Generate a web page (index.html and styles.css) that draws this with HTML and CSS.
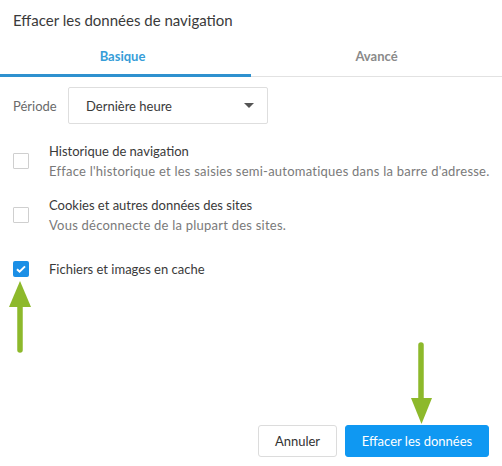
FILE: index.html
```html
<!DOCTYPE html>
<html lang="fr">
<head>
    <meta charset="UTF-8">
    <title>Effacer les données de navigation</title>
    <link rel="stylesheet" href="styles.css">
</head>
<body>
    <div class="dialog">
        <h1 class="title">Effacer les données de navigation</h1>

        <div class="tabs">
            <div class="tab active">Basique</div>
            <div class="tab">Avancé</div>
        </div>

        <div class="period">
            <label class="period-label">Période</label>
            <div class="select">
                <span>Dernière heure</span>
                <span class="caret"></span>
            </div>
        </div>

        <div class="options">
            <div class="option">
                <span class="box"></span>
                <div class="option-text">
                    <div class="option-title">Historique de navigation</div>
                    <div class="option-desc">Efface l'historique et les saisies semi-automatiques dans la barre d'adresse.</div>
                </div>
            </div>
            <div class="option">
                <span class="box"></span>
                <div class="option-text">
                    <div class="option-title">Cookies et autres données des sites</div>
                    <div class="option-desc">Vous déconnecte de la plupart des sites.</div>
                </div>
            </div>
            <div class="option">
                <span class="box checked">
                    <svg width="16" height="16" viewBox="0 0 16 16"><path d="M4 8.2l2.6 2.5L12 5.4" fill="none" stroke="#fff" stroke-width="2"/></svg>
                </span>
                <div class="option-text">
                    <div class="option-title">Fichiers et images en cache</div>
                </div>
            </div>
        </div>

        <div class="footer">
            <button class="btn cancel">Annuler</button>
            <button class="btn primary">Effacer les données</button>
        </div>

        <!-- annotation arrows drawn over the dialog -->
        <svg class="arrows" width="502" height="466" viewBox="0 0 502 466">
            <line x1="20" y1="300" x2="20" y2="350" stroke="#8db92b" stroke-width="5.5" stroke-linecap="round"/>
            <polygon points="9,307 31,307 20,281" fill="#8db92b"/>
            <line x1="421" y1="345" x2="421" y2="405" stroke="#8db92b" stroke-width="5.5" stroke-linecap="round"/>
            <polygon points="411,398 432,398 421.5,424" fill="#8db92b"/>
        </svg>
    </div>
</body>
</html>
```

FILE: styles.css
```css
body {
    margin: 0;
    font-family: Lato, "Open Sans", sans-serif;
    color: #333;
    background: #fff;
}
.dialog {
    position: relative;
    width: 502px;
    height: 466px;
    display: flex;
    flex-direction: column;
}
.title {
    margin: 0;
    padding: 10px 13px 0;
    height: 28px;
    font-size: 15px;
    font-weight: normal;
    line-height: 20px;
    color: #3a3a3a;
}
.tabs {
    display: flex;
    border-bottom: 1px solid #e2e2e2;
}
.tab {
    flex: 1;
    height: 36px;
    line-height: 36px;
    text-align: center;
    font-size: 13px;
    font-weight: bold;
    color: #8a8a8a;
    border-bottom: 3px solid transparent;
    margin-bottom: -1px;
}
.tab.active {
    color: #369dd8;
    border-bottom-color: #2f91cf;
    text-indent: -6px;
}
.period {
    display: flex;
    align-items: center;
    margin-top: 10px;
    padding-left: 13px;
}
.period-label {
    width: 55px;
    font-size: 13px;
    color: #6a6a6a;
}
.select {
    box-sizing: border-box;
    width: 200px;
    height: 37px;
    display: flex;
    align-items: center;
    justify-content: space-between;
    padding: 0 13px 0 17px;
    border: 1px solid #dedede;
    border-radius: 2px;
    font-size: 13px;
    color: #3a3a3a;
}
.caret {
    width: 0;
    height: 0;
    border-left: 5px solid transparent;
    border-right: 5px solid transparent;
    border-top: 5px solid #555;
}
.options {
    margin-top: 10px;
}
.option {
    display: flex;
    align-items: center;
    height: 54px;
    padding-left: 13px;
}
.box {
    box-sizing: border-box;
    width: 16px;
    height: 16px;
    border: 1px solid #cfcfcf;
    border-radius: 1px;
    margin-right: 20px;
    flex-shrink: 0;
}
.box.checked {
    border: none;
    border-radius: 2px;
    background: #1b8fe6;
}
.box svg {
    display: block;
}
.option-title {
    font-size: 13px;
    line-height: 20px;
    color: #3a3a3a;
}
.option-desc {
    font-size: 13px;
    line-height: 20px;
    letter-spacing: 0.23px;
    color: #7a7a7a;
}
.footer {
    margin-top: auto;
    display: flex;
    justify-content: flex-end;
    gap: 8px;
    padding: 0 13px 9px 0;
}
.btn {
    box-sizing: border-box;
    height: 32px;
    padding: 0;
    font-family: inherit;
    font-size: 13px;
    color: #333;
    background: #fff;
    border: 1px solid #dcdcdc;
    border-radius: 3px;
}
.btn.cancel {
    width: 79px;
}
.btn.primary {
    width: 144px;
    color: #fff;
    background: #0f98f2;
    border-color: #0f98f2;
}
.arrows {
    position: absolute;
    left: 0;
    top: 0;
    pointer-events: none;
}
```
